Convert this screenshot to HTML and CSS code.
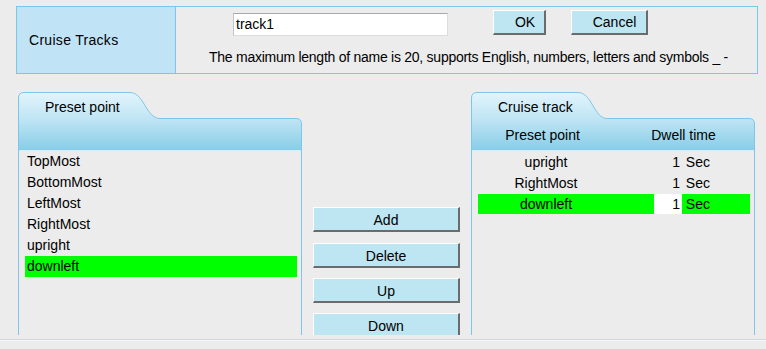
FILE: index.html
```html
<!DOCTYPE html>
<html>
<head>
<meta charset="utf-8">
<link rel="stylesheet" href="styles.css">
</head>
<body>
<div class="viewport">
  <div class="top">
    <div class="top-label">Cruise Tracks</div>
    <div class="top-body">
      <div class="name-row">
        <div class="name-input">track1</div>
        <div class="btn btn-ok">OK</div>
        <div class="btn btn-cancel">Cancel</div>
      </div>
      <div class="hint">The maximum length of name is 20, supports English, numbers, letters and symbols _ -</div>
    </div>
  </div>

  <div class="lower">
    <div class="panel">
      <div class="panel-head">
        <svg class="head-bg" width="284" height="59" viewBox="0 0 284 59">
          <defs>
            <linearGradient id="g1" x1="0" y1="0" x2="0" y2="1">
              <stop offset="0" stop-color="#e2f4fc"/>
              <stop offset="0.45" stop-color="#c0e5f4"/>
              <stop offset="1" stop-color="#86cde7"/>
            </linearGradient>
          </defs>
          <path d="M0.5,59 V6 Q0.5,0.5 6,0.5 H112 C126,0.5 128,26.5 142,26.5 H278 Q283.5,26.5 283.5,32 V59" fill="url(#g1)" stroke="#7cc7e9" stroke-width="1"/>
          <rect x="1" y="58" width="282" height="1" fill="#d6edf7"/>
        </svg>
        <div class="tab-title">Preset point</div>
      </div>
      <div class="panel-body">
        <div class="list">
          <div class="item">TopMost</div>
          <div class="item">BottomMost</div>
          <div class="item">LeftMost</div>
          <div class="item">RightMost</div>
          <div class="item">upright</div>
          <div class="item selected">downleft</div>
        </div>
      </div>
    </div>

    <div class="actions">
      <div class="btn btn-wide">Add</div>
      <div class="btn btn-wide">Delete</div>
      <div class="btn btn-wide">Up</div>
      <div class="btn btn-wide">Down</div>
    </div>

    <div class="panel">
      <div class="panel-head">
        <svg class="head-bg" width="284" height="59" viewBox="0 0 284 59">
          <defs>
            <linearGradient id="g2" x1="0" y1="0" x2="0" y2="1">
              <stop offset="0" stop-color="#e2f4fc"/>
              <stop offset="0.45" stop-color="#c0e5f4"/>
              <stop offset="1" stop-color="#86cde7"/>
            </linearGradient>
          </defs>
          <path d="M0.5,59 V6 Q0.5,0.5 6,0.5 H107 C121,0.5 123,26.5 136,26.5 H278 Q283.5,26.5 283.5,32 V59" fill="url(#g2)" stroke="#7cc7e9" stroke-width="1"/>
          <rect x="1" y="58" width="282" height="1" fill="#d6edf7"/>
        </svg>
        <div class="tab-title">Cruise track</div>
        <div class="head-cols">
          <div>Preset point</div>
          <div>Dwell time</div>
        </div>
      </div>
      <div class="panel-body">
        <div class="track">
          <div class="trow"><div>upright</div><div><span class="dwell">1</span> Sec</div></div>
          <div class="trow"><div>RightMost</div><div><span class="dwell">1</span> Sec</div></div>
          <div class="trow selected"><div>downleft</div><div><span class="dwell">1</span> Sec</div></div>
        </div>
      </div>
    </div>
  </div>
</div>
<div class="sep"></div>
</body>
</html>
```

FILE: styles.css
```css
html, body {
  margin: 0;
  padding: 0;
}
body {
  background: #ececec;
  font-family: "Liberation Sans", Arial, sans-serif;
  font-size: 14px;
  color: #000;
}
.viewport {
  height: 335px;
  overflow: hidden;
  padding: 6px 0 0 16px;
  box-sizing: border-box;
}
.top {
  display: flex;
  width: 742px;
  height: 68px;
  border: 1px solid #7cc7e9;
  box-sizing: border-box;
}
.top-label {
  flex: none;
  width: 159px;
  background: #c1e3f6;
  border-right: 1px solid #7cc7e9;
  display: flex;
  align-items: center;
  padding-left: 12px;
  box-sizing: border-box;
  letter-spacing: 0.3px;
}
.top-body {
  flex: 1;
  display: flex;
  flex-direction: column;
}
.name-row {
  display: flex;
  align-items: flex-start;
  padding-left: 57px;
  height: 29px;
}
.name-input {
  width: 215px;
  height: 23px;
  box-sizing: border-box;
  margin-top: 6px;
  border: 1px solid #dcdcdc;
  border-top-color: #a8a8a8;
  border-left-color: #c4c4c4;
  background: #fff;
  padding: 0 2px;
  line-height: 21px;
}
.btn {
  background: #bde5f2;
  border-style: solid;
  border-width: 1px 2px 2px 1px;
  border-color: #ffffff #6b6b6b #6b6b6b #ffffff;
  box-sizing: border-box;
  height: 25px;
  line-height: 23px;
  text-align: center;
}
.btn-ok {
  margin-top: 3px;
  margin-left: 45px;
  width: 53px;
  padding-left: 12px;
}
.btn-cancel {
  margin-top: 3px;
  margin-left: 25px;
  width: 77px;
  padding-left: 11px;
}
.hint {
  text-align: center;
  margin-top: 13px;
  line-height: 16px;
  letter-spacing: -0.26px;
  padding-left: 4px;
}
.lower {
  display: flex;
  margin-top: 18px;
  margin-left: 2px;
  align-items: stretch;
  height: 300px;
}
.panel {
  width: 284px;
  display: flex;
  flex-direction: column;
  flex: none;
}
.panel-head {
  position: relative;
  height: 59px;
  box-sizing: border-box;
  padding-top: 7px;
}
.head-bg {
  position: absolute;
  left: 0;
  top: 0;
  display: block;
}
.tab-title {
  position: relative;
  padding-left: 27px;
  line-height: 16px;
}
.head-cols {
  position: relative;
  display: grid;
  grid-template-columns: 141px 141px;
  margin-left: 1px;
  margin-top: 12px;
  line-height: 16px;
  text-align: center;
}
.panel-body {
  flex: 1;
  border-left: 1px solid #7cc7e9;
  border-right: 1px solid #7cc7e9;
}
.list {
  padding: 0 4px 0 6px;
}
.item {
  height: 21px;
  line-height: 21px;
  padding-left: 2px;
}
.selected {
  background: #00ff00;
}
.actions {
  width: 147px;
  flex: none;
  margin: 0 11px;
  padding-top: 115px;
  display: flex;
  flex-direction: column;
  gap: 10px;
}
.btn-wide {
  width: 147px;
  flex: none;
  line-height: 24px;
}
.btn-wide + .btn-wide {
  margin-top: 1px;
}
.btn-wide + .btn-wide + .btn-wide {
  margin-top: 0;
}
.track {
  display: flex;
  flex-direction: column;
  gap: 1px;
  padding: 1px 4px 0 6px;
}
.trow {
  display: grid;
  grid-template-columns: 136px 136px;
  height: 20px;
  line-height: 20px;
  text-align: center;
}
.dwell {
  display: inline-block;
  width: 28px;
  box-sizing: border-box;
  padding-right: 2px;
  text-align: right;
  vertical-align: top;
}
.trow.selected .dwell {
  background: #ffffff;
}
.sep {
  margin-top: 4px;
  height: 1px;
  background: #c9d8e2;
  border-bottom: 1px solid #f6f6f6;
}
```
